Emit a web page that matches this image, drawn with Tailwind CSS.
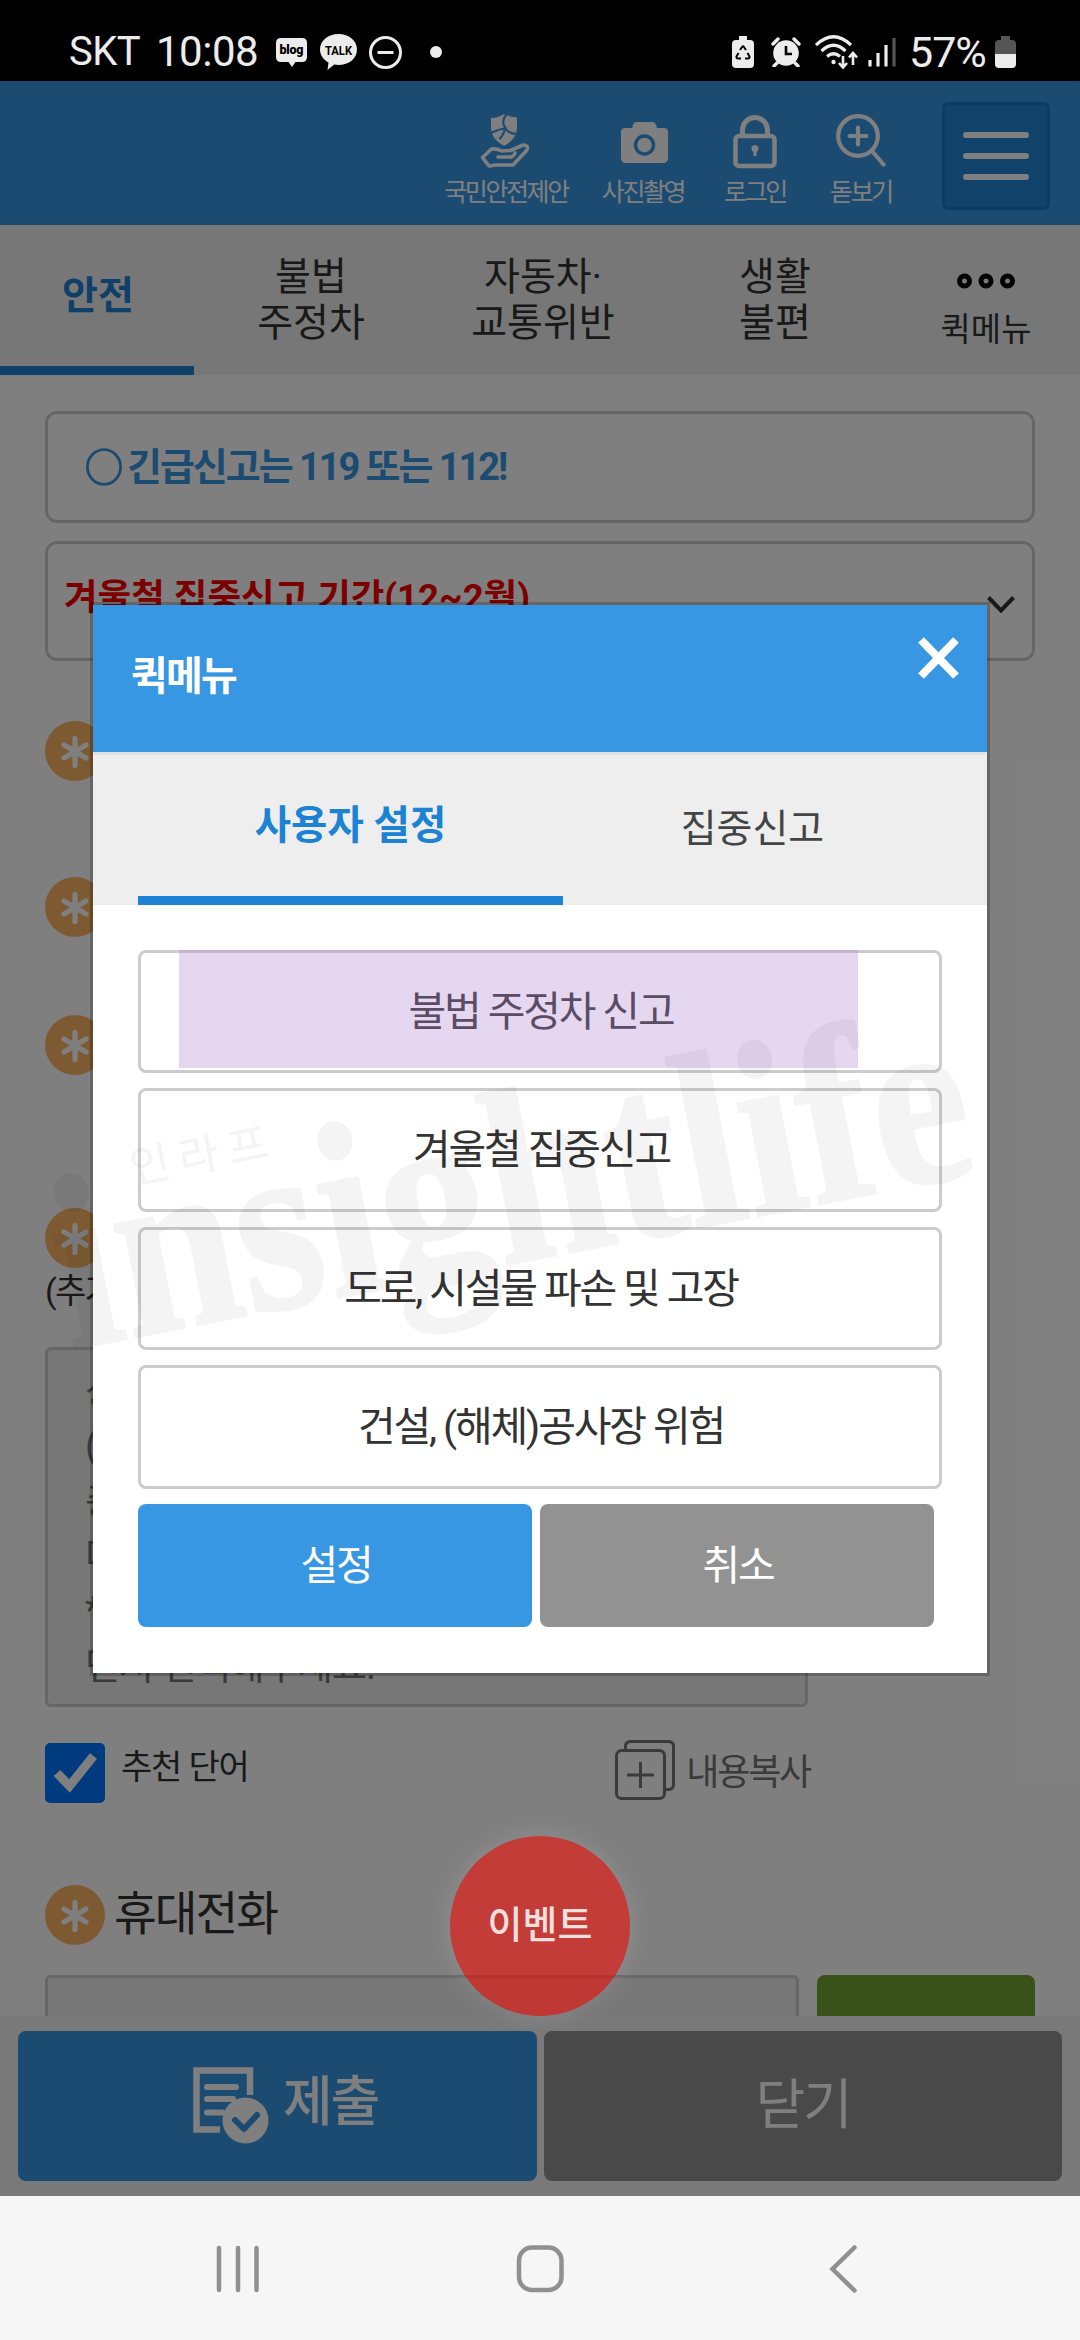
<!DOCTYPE html>
<html lang="ko">
<head>
<meta charset="utf-8">
<title>안전신문고</title>
<script src="https://cdn.jsdelivr.net/npm/@tailwindcss/browser@4"></script>
</head>
<body class="bg-white">
<svg class="hidden">
  <symbol id="req" viewBox="0 0 60 60"><circle cx="30" cy="30" r="30" fill="#fcb464"/><path d="M30 17.500v27M19 24l22 13M41 24L19 37" stroke="#fff" stroke-width="5.200" stroke-linecap="round"/></symbol>
</svg>
<div class="relative w-[1080px] h-[2340px] overflow-hidden flex flex-col text-[#333] font-['Roboto','Noto_Sans_CJK_KR',sans-serif] whitespace-nowrap">

  <!-- status bar -->
  <div class="h-[81px] shrink-0 bg-black text-[#ececec] flex items-center pl-[69px] pr-[64px] pt-[23px]">
    <span class="text-[40px] leading-[58px] w-[87px] tracking-[-0.5px]">SKT</span>
    <span class="text-[42px] leading-[58px] w-[120px] tracking-[-0.5px]">10:08</span>
    <svg class="w-[31px] h-[30px] mr-[13px]" viewBox="0 0 31 30"><path d="M5 1h21q5 0 5 5v14q0 5-5 5h-6.500L16 30l-3.500-5H5q-5 0-5-5V6q0-5 5-5z" fill="#ececec"/><text x="15.500" y="17" text-anchor="middle" font-family="Roboto" font-weight="900" font-size="12.500" textLength="24" fill="#000">blog</text></svg>
    <svg class="w-[37px] h-[36px] mr-[12px]" viewBox="0 0 37 36"><path d="M18.500 0C29 0 37 6.500 37 15.500S29 31 18.500 31c-1.500 0-3-.1-4.300-.4L7.500 36l1-7.500C3.500 25.800 0 21 0 15.500 0 6.500 8 0 18.500 0z" fill="#ececec"/><text x="18.500" y="20.500" text-anchor="middle" font-family="Roboto" font-weight="700" font-size="13.500" textLength="27" lengthAdjust="spacingAndGlyphs" fill="#000">TALK</text></svg>
    <svg class="w-[33px] h-[33px] mr-[28px]" viewBox="0 0 33 33" fill="none" stroke="#ececec" stroke-width="3"><circle cx="16.500" cy="16.500" r="15"/><path d="M8.500 16.500h16"/></svg>
    <span class="size-[12px] rounded-full bg-[#ececec]"></span>
    <svg class="w-[22px] h-[32px] ml-auto mr-[17px]" viewBox="0 0 22 32"><path d="M7 0h8v4h3q4 0 4 4v20q0 4-4 4H4q-4 0-4-4V8q0-4 4-4h3z" fill="#ececec"/><path d="M8 14l2.400-3.500q.6-.7 1.200 0L14 14M15.500 17l2 3.500q.3 1.700-1.500 2h-3M9 22.500H6q-2-.5-1.500-2l2-3.500" fill="none" stroke="#000" stroke-width="2"/></svg>
    <svg class="w-[30px] h-[30px] mr-[14px]" viewBox="0 0 30 30"><circle cx="15" cy="16" r="12.800" fill="#ececec"/><path d="M2 7l5-5M28 7l-5-5M6 26l-3 3M24 26l3 3" stroke="#ececec" stroke-width="3.400" stroke-linecap="round"/><path d="M15 9v8h6" fill="none" stroke="#000" stroke-width="2.600"/></svg>
    <svg class="w-[44px] h-[34px] mr-[9px]" viewBox="0 0 44 34" fill="none" stroke="#ececec" stroke-width="3.200"><path d="M1 10Q18.500-6.500 36 10M6.500 16Q18.500 4.500 30.500 16M12 21.500q6.500-5.500 13 0"/><circle cx="18.500" cy="27" r="2.200" fill="#ececec" stroke="none"/><path d="M28 21v11M24 28l4 4.500 4-4.500M38 30V19M34 22.500l4-4.500 4 4.500" stroke-width="2.600"/></svg>
    <svg class="w-[28px] h-[30px] mr-[15px]" viewBox="0 0 28 30" stroke="#ececec" stroke-width="3.200"><path d="M2 23v6.500M10 16v13.500M18 8v21.500"/><path d="M26 1v28.500" stroke="#555"/></svg>
    <span class="text-[43px] leading-[58px] w-[86px] -ml-[2px] tracking-[-1px]">57%</span>
    <svg class="w-[21px] h-[32px]" viewBox="0 0 21 32"><path d="M6 0h9v4h2q4 0 4 4v10H0V8q0-4 4-4h2z" fill="#555"/><path d="M0 18h21v10q0 4-4 4H4q-4 0-4-4z" fill="#ececec"/></svg>
  </div>

  <!-- app header -->
  <div class="h-[144px] shrink-0 bg-[#3897e2] text-white flex items-center justify-end pr-[30px] pt-[6px] text-[25px] tracking-[-2.400px] leading-[32px]">
    <div class="flex flex-col items-center gap-[7px] w-[126px] mt-[10px]">
      <svg class="w-[50px] h-[56px] -ml-[3px]" viewBox="0 0 50 56"><path d="M11 4q7 0 13-4 6 3 13 3.500V14q0 11-13 18Q11 25 11 14z" fill="#fff"/><path d="M26.500 0q-6 8-1 14-2 7-6 11M11 19q8-4 14.500-4.500Q29 20 37 20" fill="none" stroke="#3897e2" stroke-width="2.200"/><path d="M9 52l-6.500-8.500 9-8.500q6-.5 10 2l9-.5L43 31q6 0 4 5L33 51H15l-5 1zM18 43h13q3-1 4-4" fill="none" stroke="#fff" stroke-width="3.600" stroke-linejoin="round" stroke-linecap="round"/></svg>
      <span>국민안전제안</span>
    </div>
    <div class="flex flex-col items-center gap-[7px] w-[84px] ml-[32px] mt-[10px]">
      <svg class="w-[48px] h-[56px] ml-[3px]" viewBox="0 0 48 56"><path d="M15 8h17q2 0 3 3l1 3h7q4 0 4 4v26q0 5-5 5H5q-5 0-5-5V18q0-4 4-4h7l1-3q1-3 3-3z" fill="#fff"/><circle cx="23.500" cy="31" r="9" fill="#fff" stroke="#3897e2" stroke-width="3.500"/></svg>
      <span>사진촬영</span>
    </div>
    <div class="flex flex-col items-center gap-[7px] w-[64px] ml-[38px] mt-[10px]">
      <svg class="w-[44px] h-[56px]" viewBox="0 0 44 56" fill="none" stroke="#fff" stroke-width="5"><path d="M9.500 21V16a12.500 12.500 0 0125 0v5"/><rect x="2.500" y="22" width="39" height="30" rx="3.500" stroke-width="4.500"/><circle cx="22" cy="34.500" r="3.500" fill="#fff" stroke="none"/><path d="M22 35v7" stroke-width="3"/></svg>
      <span>로그인</span>
    </div>
    <div class="flex flex-col items-center gap-[7px] w-[64px] ml-[42px] mt-[10px]">
      <svg class="w-[50px] h-[56px]" viewBox="0 0 50 56" fill="none" stroke="#fff" stroke-width="4.200" stroke-linecap="round"><circle cx="22" cy="22" r="19.800"/><path d="M22 13.500v17M13.500 22h17M36 37l11.500 13.500"/></svg>
      <span>돋보기</span>
    </div>
    <div class="w-[108px] h-[108px] ml-[49px] rounded-md border-[3px] border-[#1c78c0] bg-[#2285d4] flex flex-col items-center justify-center gap-[15px]">
      <span class="w-[66px] h-[6px] rounded-full bg-white"></span><span class="w-[66px] h-[6px] rounded-full bg-white"></span><span class="w-[66px] h-[6px] rounded-full bg-white"></span>
    </div>
  </div>

  <!-- category tabs -->
  <div class="h-[150px] shrink-0 bg-[#eee] flex text-center text-[39px] leading-[46px] items-stretch">
    <div class="w-[194px] border-b-[9px] border-[#1c80d2] text-[#1c80d2] font-bold flex items-center justify-center pl-[2px]">안전</div>
    <div class="w-[234px] pt-[29px]">불법<br>주정차</div>
    <div class="w-[230px] pt-[29px]">자동차·<br>교통위반</div>
    <div class="w-[234px] pt-[29px]">생활<br>불편</div>
    <div class="w-[188px] flex flex-col items-center pt-[48px]">
      <svg class="w-[58px] h-[16px]" viewBox="0 0 58 16" fill="none" stroke="#000" stroke-width="5"><circle cx="7.500" cy="8" r="5"/><circle cx="29" cy="8" r="5"/><circle cx="50.500" cy="8" r="5"/></svg>
      <span class="text-[33px] leading-[48px] mt-[17px]">퀵메뉴</span>
    </div>
  </div>

  <!-- report form -->
  <div class="h-[1641px] shrink-0 overflow-hidden px-[45px] pt-[36px] bg-white">
    <div class="h-[112px] border-[3px] border-[#ccc] rounded-xl flex items-center pl-[38px] gap-[5px] text-[#3897e2] font-bold text-[38px] tracking-[-2.050px]">
      <svg class="w-[36px] h-[38px]" viewBox="0 0 36 38" fill="none" stroke="#3897e2" stroke-width="2.800"><ellipse cx="18" cy="19" rx="16.600" ry="17.300"/></svg>
      <span class="leading-[56px]">긴급신고는 119 또는 112!</span>
    </div>
    <div class="h-[120px] mt-[18px] border-[3px] border-[#ccc] rounded-xl flex items-center justify-between pl-[16px] pr-[17px]">
      <span class="text-[#f80000] font-bold text-[36.500px] leading-[56px] -mt-[7px]">겨울철 집중신고 기간(12~2월)</span>
      <svg class="w-[28px] h-[17px] mt-[7px]" viewBox="0 0 28 17" fill="none" stroke="#333" stroke-width="4"><path d="M1.500 1.500L14 14.500 26.500 1.500"/></svg>
    </div>
    <svg class="size-[60px] mt-[60px]"><use href="#req"/></svg>
    <svg class="size-[60px] mt-[96px]"><use href="#req"/></svg>
    <svg class="size-[60px] mt-[78px]"><use href="#req"/></svg>
    <svg class="size-[60px] mt-[133px]"><use href="#req"/></svg>
    <div class="h-[79px] text-[34px] leading-[46px] tracking-[-1.700px]">(추가</div>
    <div class="w-[763px] h-[360px] border-[3px] border-[#ccc] rounded-md bg-[#eee] text-[#757575] pl-[37px] pt-[14px] text-[38px] leading-[55px] tracking-[-0.900px]">상<br>(<br>총<br>다<br>*<br>먼저 선택해주세요.</div>
    <div class="mt-[36px] h-[60px] w-[763px] flex items-start">
      <svg class="size-[60px]" viewBox="0 0 60 60"><rect width="60" height="60" rx="5" fill="#0075ff"/><path d="M12 30L24.500 43 48.500 13" fill="none" stroke="#fff" stroke-width="9"/></svg>
      <span class="ml-[16px] text-[34px] leading-[44px] tracking-[-1.200px] mt-[2px]">추천 단어</span>
      <svg class="size-[60px] ml-auto -mt-[3px]" viewBox="0 0 60 60" fill="none" stroke="#757575" stroke-width="3"><rect x="1.500" y="10.500" width="48" height="48" rx="5"/><path d="M10.500 10V6.500q0-5 5-5h38q5 0 5 5v38q0 5-5 5H50M25.500 22v26M12 35h27"/></svg>
      <span class="text-[36px] leading-[52px] tracking-[-2.200px] ml-[11px] mt-[4px] -mr-[2px] text-[#757575]">내용복사</span>
    </div>
    <div class="mt-[82px] h-[60px] flex items-center">
      <svg class="size-[60px]"><use href="#req"/></svg>
      <span class="ml-[9px] text-[46.500px] leading-[60px] tracking-[-2px] -mt-[2px]">휴대전화</span>
    </div>
    <div class="mt-[30px] flex gap-[18px] h-[120px]">
      <div class="w-[754px] border-[3px] border-[#ccc] rounded-md bg-[#eee]"></div>
      <div class="w-[218px] rounded-lg bg-[#70a432]"></div>
    </div>
  </div>

  <!-- bottom actions -->
  <div class="h-[180px] shrink-0 bg-[#f2f2f2] px-[18px] py-[15px] flex gap-[7px] text-white text-[54px] tracking-[-2.200px]">
    <div class="w-[519px] rounded-lg bg-[#3897e2] flex items-center pl-[175px]">
      <svg class="w-[76px] h-[78px]" viewBox="0 0 76 78" fill="none" stroke="#fff" stroke-width="6.500"><path d="M57 28V3.500H3.500v59H27"/><path d="M14 20h29M14 32h26M14 45.500h15" stroke-linecap="round" stroke-width="6"/><circle cx="52.500" cy="53.500" r="23" fill="#fff" stroke="none"/><path d="M42 53l9 9 13-14" stroke="#3897e2" stroke-width="6" stroke-linecap="round" stroke-linejoin="round"/></svg>
      <span class="ml-[14px] font-medium leading-[78px] -mt-[6px]">제출</span>
    </div>
    <div class="w-[518px] rounded-lg bg-[#929292] flex items-center justify-center leading-[78px]">닫기</div>
  </div>

  <!-- system navigation -->
  <div class="h-[144px] shrink-0 bg-[#f6f6f6] flex items-center">
    <svg class="w-[1080px] h-[144px]" viewBox="0 0 1080 144" fill="none" stroke="#909090" stroke-width="4.500" stroke-linecap="round"><path d="M219 52v42M238 52v42M256.500 52v42"/><rect x="519" y="51.500" width="42.500" height="42.500" rx="13"/><path d="M854.500 51.500L832.500 73l22 21.500"/></svg>
  </div>

  <!-- dimmed backdrop with dialog -->
  <div class="absolute left-0 top-[81px] w-[1080px] h-[2115px] bg-black/50 flex items-center justify-center">
    <div class="w-[900px] border-[3px] border-black/20 bg-clip-padding bg-white h-[1074px] flex flex-col">
      <div class="h-[147px] shrink-0 bg-[#3897e2] text-white flex justify-between pl-[38px] pr-[28px]">
        <span class="font-bold text-[40px] leading-[60px] tracking-[-1.800px] mt-[42px]">퀵메뉴</span>
        <svg class="w-[41px] h-[42px] mt-[32px]" viewBox="0 0 41 42" stroke="#fff" stroke-width="8"><path d="M3 3l35 36M38 3L3 39"/></svg>
      </div>
      <div class="h-[153px] shrink-0 bg-[#eee] border-t-[3px] border-[#e2e2e2] px-[45px] flex text-center">
        <div class="w-[425px] border-b-[9px] border-[#1c82d4] text-[#1c82d4] font-bold text-[39.500px] leading-[56px] pt-[43px]">사용자 설정</div>
        <div class="flex-1 text-[#444] text-[39px] leading-[56px] pt-[46px]">집중신고</div>
      </div>
      <div class="px-[45px] pt-[45px] text-[41px] tracking-[-2.150px] leading-[60px] text-center flex flex-col gap-[15px]">
        <div class="relative h-[123.500px] border-[3px] border-[#ccc] rounded-lg pt-[29px] pl-[2px]">불법 주정차 신고
          <div class="absolute left-[38px] -top-[3px] w-[679px] h-[118px] bg-[rgba(174,130,208,0.32)]"></div>
        </div>
        <div class="h-[123.500px] border-[3px] border-[#ccc] rounded-lg pt-[29px] pl-[3px]">겨울철 집중신고</div>
        <div class="h-[123.500px] border-[3px] border-[#ccc] rounded-lg pt-[29px] pl-[2px]">도로, 시설물 파손 및 고장</div>
        <div class="h-[123.500px] border-[3px] border-[#ccc] rounded-lg pt-[29px] pl-[2px]">건설, (해체)공사장 위험</div>
        <div class="h-[123.500px] flex gap-[8px] text-white">
          <div class="w-[394px] rounded-lg bg-[#3897e2] pt-[32px] pl-[2px]">설정</div>
          <div class="w-[394px] rounded-lg bg-[#929292] pt-[32px] pl-[2px]">취소</div>
        </div>
      </div>
    </div>
  </div>

  <!-- floating event badge -->
  <div class="absolute left-[450px] top-[1836px] size-[180px] rounded-full bg-[rgba(241,15,7,0.6)] shadow-[0_0_24px_rgba(255,255,255,0.15)] flex items-center justify-center text-[#f3dfdd] font-medium text-[38px] leading-[56px] pb-[3px]">이벤트</div>

  <!-- watermark -->
  <svg class="absolute left-0 top-[960px] w-[1080px] h-[460px] pointer-events-none" viewBox="0 960 1080 460">
    <g opacity="0.04" fill="#000">
      <text transform="translate(70 1350) rotate(-11)" font-family="Liberation Serif" font-weight="700" font-size="250" textLength="928" lengthAdjust="spacingAndGlyphs" stroke="#000" stroke-width="2">insightlife</text>
      <text transform="translate(133 1184) rotate(-11)" font-family="Noto Sans CJK KR" font-size="44" textLength="140">인라프</text>
    </g>
  </svg>
</div>
</body>
</html>
